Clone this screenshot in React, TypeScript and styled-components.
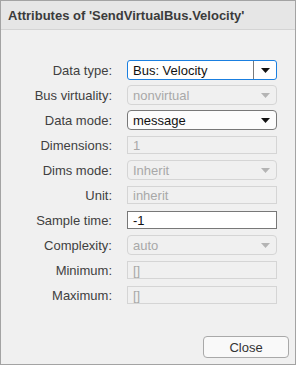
import React from 'react';
import styled, { createGlobalStyle } from 'styled-components';

const GlobalStyle = createGlobalStyle`
    html, body {
        margin: 0;
        padding: 0;
        background: #ffffff;
    }
    * {
        box-sizing: border-box;
    }
`;

type FieldKind = 'combo' | 'select' | 'text' | 'disabledSelect' | 'disabledText';

interface Field {
    label: string;
    value: string;
    kind: FieldKind;
}

const fields: Field[] = [
    { label: 'Data type:', value: 'Bus: Velocity', kind: 'combo' },
    { label: 'Bus virtuality:', value: 'nonvirtual', kind: 'disabledSelect' },
    { label: 'Data mode:', value: 'message', kind: 'select' },
    { label: 'Dimensions:', value: '1', kind: 'disabledText' },
    { label: 'Dims mode:', value: 'Inherit', kind: 'disabledSelect' },
    { label: 'Unit:', value: 'inherit', kind: 'disabledText' },
    { label: 'Sample time:', value: '-1', kind: 'text' },
    { label: 'Complexity:', value: 'auto', kind: 'disabledSelect' },
    { label: 'Minimum:', value: '[]', kind: 'disabledText' },
    { label: 'Maximum:', value: '[]', kind: 'disabledText' },
];

const Arrow = ({ disabled }: { disabled?: boolean }) => (
    <svg width='9' height='5' viewBox='0 0 9 5' aria-hidden='true'>
        <path d='M0 0h9L4.5 5z' fill={disabled ? '#b4b4b4' : '#111111'} />
    </svg>
);

const App: React.FC = () => {
    return (
        <>
            <GlobalStyle />
            <Window>
                <TitleBar>Attributes of 'SendVirtualBus.Velocity'</TitleBar>
                <Body>
                    <FormGrid>
                        {fields.map((f) => (
                            <React.Fragment key={f.label}>
                                <Label>{f.label}</Label>
                                {f.kind === 'combo' && (
                                    <Combo>
                                        <ComboText>{f.value}</ComboText>
                                        <ComboButton>
                                            <Arrow />
                                        </ComboButton>
                                    </Combo>
                                )}
                                {(f.kind === 'select' || f.kind === 'disabledSelect') && (
                                    <Select $disabled={f.kind === 'disabledSelect'}>
                                        <span>{f.value}</span>
                                        <Arrow disabled={f.kind === 'disabledSelect'} />
                                    </Select>
                                )}
                                {(f.kind === 'text' || f.kind === 'disabledText') && (
                                    <TextBox $disabled={f.kind === 'disabledText'}>{f.value}</TextBox>
                                )}
                            </React.Fragment>
                        ))}
                    </FormGrid>
                    <Footer>
                        <Button>Close</Button>
                    </Footer>
                </Body>
            </Window>
        </>
    );
};

const Window = styled.div`
    width: 296px;
    height: 365px;
    border: 1px solid #a3a3a3;
    display: flex;
    flex-direction: column;
    background: #f0f0f0;
    font-family: 'Liberation Sans', Arial, sans-serif;
    font-size: 13px;
`;

const TitleBar = styled.div`
    height: 29px;
    flex: none;
    background: #e6e6e6;
    border-bottom: 1px solid #d4d4d4;
    padding: 0 7px;
    display: flex;
    align-items: center;
    font-weight: bold;
    color: #3b3b3b;
    font-size: 13px;
    white-space: nowrap;
`;

const Body = styled.div`
    flex: 1;
    display: flex;
    flex-direction: column;
    justify-content: space-between;
    padding: 30px 0 6px;
`;

const FormGrid = styled.div`
    display: grid;
    grid-template-columns: 111px 150px;
    grid-auto-rows: 20px;
    column-gap: 15px;
    row-gap: 5px;
    align-items: center;
`;

const Label = styled.div`
    text-align: right;
    color: #404040;
    white-space: nowrap;
`;

const Combo = styled.div`
    height: 20px;
    display: flex;
    background: #ffffff;
    border: 1px solid #1a7fe0;
    border-radius: 3px;
    color: #111111;
`;

const ComboText = styled.div`
    flex: 1;
    padding-left: 5px;
    display: flex;
    align-items: center;
`;

const ComboButton = styled.div`
    width: 23px;
    border-left: 1px solid #7a7a7a;
    display: flex;
    align-items: center;
    justify-content: center;
`;

const Select = styled.div<{ $disabled?: boolean }>`
    height: 20px;
    display: flex;
    align-items: center;
    justify-content: space-between;
    padding: 0 6px 0 5px;
    border-radius: 4px;
    border: 1px solid ${(p) => (p.$disabled ? '#d5d5d5' : '#787878')};
    background: ${(p) => (p.$disabled ? '#f0f0f0' : '#fcfcfc')};
    color: ${(p) => (p.$disabled ? '#a8a8a8' : '#111111')};
`;

const TextBox = styled.div<{ $disabled?: boolean }>`
    height: 18px;
    display: flex;
    align-items: center;
    padding-left: 5px;
    border: 1px solid ${(p) => (p.$disabled ? '#d5d5d5' : '#787878')};
    background: ${(p) => (p.$disabled ? '#f0f0f0' : '#ffffff')};
    color: ${(p) => (p.$disabled ? '#a8a8a8' : '#111111')};
`;

const Footer = styled.div`
    display: flex;
    justify-content: flex-end;
    padding-right: 6px;
`;

const Button = styled.div`
    width: 86px;
    height: 22px;
    display: flex;
    align-items: center;
    justify-content: center;
    border: 1px solid #a9a9a9;
    border-radius: 4px;
    background: #f9f9f9;
    color: #333333;
    font-size: 13px;
`;

export default App;
